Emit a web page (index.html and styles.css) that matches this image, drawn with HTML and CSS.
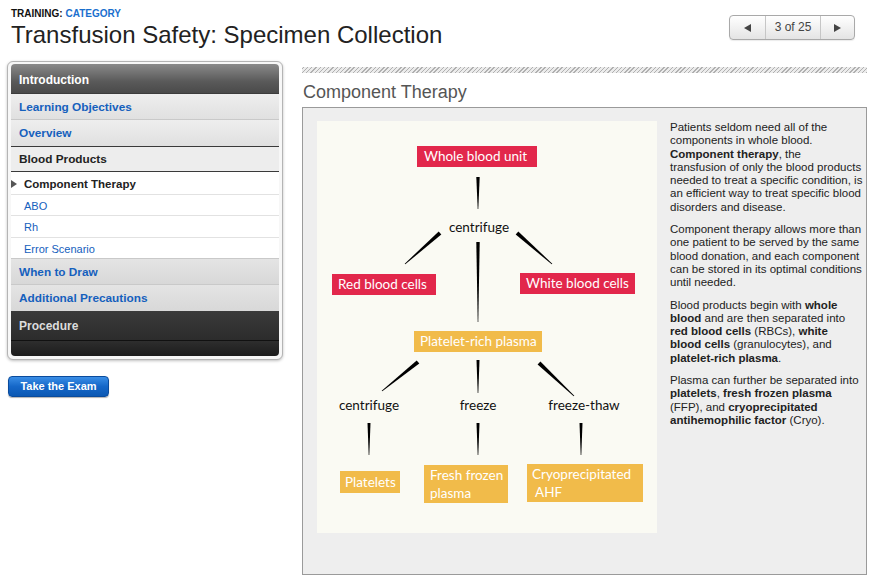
FILE: index.html
```html
<!DOCTYPE html>
<html>
<head>
<meta charset="utf-8">
<title>Transfusion Safety: Specimen Collection</title>
<link rel="stylesheet" href="styles.css">
</head>
<body>
<div class="header">
  <div class="titles">
    <div class="eyebrow">TRAINING: <span class="cat">CATEGORY</span></div>
    <h1 class="title">Transfusion Safety: Specimen Collection</h1>
  </div>
  <div class="pager">
    <span class="pg-btn pg-prev"><span class="tri-left"></span></span>
    <span class="pg-num">3 of 25</span>
    <span class="pg-btn pg-next"><span class="tri-right"></span></span>
  </div>
</div>
<div class="main">
  <div class="side">
    <div class="nav">
      <div class="nav-inner">
        <div class="nav-head">Introduction</div>
        <div class="nav-link">Learning Objectives</div>
        <div class="nav-link nav-link-end">Overview</div>
        <div class="nav-current">Blood Products</div>
        <div class="nav-sub nav-sub-active"><span class="marker"></span>Component Therapy</div>
        <div class="nav-sub">ABO</div>
        <div class="nav-sub nav-sub-rh">Rh</div>
        <div class="nav-sub nav-sub-last">Error Scenario</div>
        <div class="nav-link nav-link-b">When to Draw</div>
        <div class="nav-link nav-link-b nav-link-end">Additional Precautions</div>
        <div class="nav-dark">Procedure</div>
        <div class="nav-foot"></div>
      </div>
    </div>
    <button class="exam">Take the Exam</button>
  </div>
  <div class="content">
    <div class="stripe"></div>
    <h2 class="heading">Component Therapy</h2>
    <div class="panel">
      <div class="diagram">
        <svg class="lines" width="340" height="412" viewBox="0 0 340 412">
          <polygon points="159.3,56 162.7,56 161.3,88 160.7,88"/>
          <polygon points="121.7,110.5 124.3,113.5 88.3,143.3 87.7,142.7"/>
          <polygon points="201.3,110.5 198.7,113.5 234.7,143.3 235.3,142.7"/>
          <polygon points="159.3,121 162.7,121 161.3,201 160.7,201"/>
          <polygon points="99.7,239.4 102.3,242.6 65.3,270.3 64.7,269.7"/>
          <polygon points="159.5,239 162.5,239 161.3,272 160.7,272"/>
          <polygon points="223.4,240.5 220.6,243.5 256.7,275.3 257.3,274.7"/>
          <polygon points="50.5,302 53.5,302 52.3,334 51.7,334"/>
          <polygon points="159.5,302 162.5,302 161.3,334 160.7,334"/>
          <polygon points="262.5,302 265.5,302 264.3,334 263.7,334"/>
        </svg>
        <div class="node red n-whole">Whole blood unit</div>
        <div class="label l-cent1">centrifuge</div>
        <div class="node red n-rbc">Red blood cells</div>
        <div class="node red n-wbc">White blood cells</div>
        <div class="node gold n-prp">Platelet-rich plasma</div>
        <div class="label l-cent2">centrifuge</div>
        <div class="label l-freeze">freeze</div>
        <div class="label l-thaw">freeze-thaw</div>
        <div class="node gold n-plt">Platelets</div>
        <div class="node gold two n-ffp">Fresh frozen<br>plasma</div>
        <div class="node gold two n-cryo">Cryoprecipitated<br>&nbsp;AHF</div>
      </div>
      <div class="text">
        <p>Patients seldom need all of the<br>components in whole blood.<br><b>Component therapy</b>, the<br>transfusion of only the blood products<br>needed to treat a specific condition, is<br>an efficient way to treat specific blood<br>disorders and disease.</p>
        <p>Component therapy allows more than<br>one patient to be served by the same<br>blood donation, and each component<br>can be stored in its optimal conditions<br>until needed.</p>
        <p>Blood products begin with <b>whole<br>blood</b> and are then separated into<br><b>red blood cells</b> (RBCs), <b>white<br>blood cells</b> (granulocytes), and<br><b>platelet-rich plasma</b>.</p>
        <p>Plasma can further be separated into<br><b>platelets</b>, <b>fresh frozen plasma</b><br>(FFP), and <b>cryoprecipitated<br>antihemophilic factor</b> (Cryo).</p>
      </div>
    </div>
  </div>
</div>
</body>
</html>
```
FILE: styles.css
```css
* { box-sizing: border-box; }
html, body { margin: 0; padding: 0; background: #fff; }
body { font-family: "Liberation Sans", Arial, sans-serif; color: #222; width: 877px; height: 588px; overflow: hidden; }

.header { display: flex; justify-content: space-between; align-items: flex-start; height: 50px; padding: 0 22px 0 11px; }
.titles { padding-top: 8px; }
.eyebrow { font-size: 10px; line-height: 12px; font-weight: bold; color: #111; }
.eyebrow .cat { color: #1a6fce; }
.title { margin: 1px 0 0; font-size: 24px; line-height: 28px; font-weight: normal; color: #222; }

.pager { margin-top: 15px; display: flex; height: 25px; border: 1px solid #a9a9a9; border-radius: 4px; background: linear-gradient(#ffffff, #e4e4e4); box-shadow: 0 1px 1px rgba(0,0,0,0.08); }
.pg-btn { display: flex; align-items: center; justify-content: center; }
.pg-prev { width: 36px; border-right: 1px solid #c6c6c6; }
.pg-next { width: 34px; border-left: 1px solid #c6c6c6; }
.pg-num { width: 54px; text-align: center; font-size: 12px; line-height: 23px; color: #444; }
.tri-left { width: 0; height: 0; border-top: 4.5px solid transparent; border-bottom: 4.5px solid transparent; border-right: 7px solid #444; }
.tri-right { width: 0; height: 0; border-top: 4.5px solid transparent; border-bottom: 4.5px solid transparent; border-left: 7px solid #444; }

.main { display: flex; padding-left: 7px; gap: 19px; }
.side { width: 276px; margin-top: 11px; }
.nav { border: 1px solid #b4b4b4; border-radius: 6px; padding: 2px 3px 3px 3px; background: #f7f7f7; box-shadow: 0 1px 3px rgba(0,0,0,0.25); }
.nav-inner { border-radius: 4px; overflow: hidden; background: #fff; }
.nav-head { height: 30px; padding: 1px 0 0 8px; font-size: 12px; font-weight: bold; line-height: 30px; color: #fff; background: linear-gradient(#8a8a8a, #5a5a5a 60%, #4a4a4a); border-bottom: 1px solid #3c3c3c; }
.nav-link { height: 26px; padding: 1px 0 0 8px; font-size: 11.8px; font-weight: bold; line-height: 25px; color: #1560bd; background: linear-gradient(#eeeeee, #e0e0e0); border-bottom: 1px solid #c9c9c9; }
.nav-link-b { background: linear-gradient(#e4e4e4, #d8d8d8); }
.nav-current { height: 26px; padding: 1px 0 0 8px; font-size: 11.8px; font-weight: bold; line-height: 23px; color: #222; background: #ededed; border-top: 1px solid #3a3a3a; border-bottom: 1px solid #3a3a3a; }
.nav-sub { height: 21px; padding: 1px 0 0 13px; font-size: 11px; line-height: 20px; color: #1560bd; border-bottom: 1px solid #e2e2e2; background: #fff; }
.nav-sub-rh { height: 22px; line-height: 21px; }
.nav-sub-last { border-bottom: 1px solid #c9c9c9; }
.nav-sub-active { height: 23px; padding: 1px 0 0 0; line-height: 22px; display: flex; align-items: center; font-weight: bold; color: #222; font-size: 11.5px; }
.marker { width: 0; height: 0; border-top: 4px solid transparent; border-bottom: 4px solid transparent; border-left: 6px solid #555; margin-right: 7px; }
.nav-link-end { border-bottom: none; }
.nav-dark { height: 30px; padding: 1px 0 0 8px; font-size: 12px; font-weight: bold; line-height: 29px; color: #dcdcdc; background: linear-gradient(#3a3a3a, #2c2c2c); border-bottom: 1px solid #111; }
.nav-foot { height: 15px; background: linear-gradient(#2e2e2e, #1c1c1c); }

.exam { display: block; margin: 16px 0 0 1px; width: 101px; height: 21px; padding: 0; border: 1px solid #0a4b9c; border-radius: 4px; background: linear-gradient(#3a8ee6, #1567c8 50%, #0b58b3); color: #fff; font-family: "Liberation Sans", Arial, sans-serif; font-size: 11px; font-weight: bold; line-height: 19px; text-align: center; box-shadow: 0 1px 1px rgba(0,0,0,0.3); }

.content { width: 565px; }
.stripe { margin-top: 17px; height: 6px; background: repeating-linear-gradient(-45deg, #b0b0b0 0, #b0b0b0 1px, #ececec 1px, #ececec 3px); }
.heading { margin: 9px 0 5px 1px; height: 20px; font-size: 18px; line-height: 20px; font-weight: normal; color: #555; }
.panel { display: flex; align-items: flex-start; height: 468px; padding: 13px 2px 0 14px; border: 1px solid #9a9a9a; background: #eeeeee; gap: 13px; }

.diagram { position: relative; flex: none; width: 340px; height: 412px; background: #fafaf3; font-family: Lato, "Open Sans", sans-serif; }
.lines { position: absolute; left: 0; top: 0; fill: #000; }
.node { position: absolute; color: #fff; font-size: 13.5px; line-height: 21px; padding-left: 7px; white-space: nowrap; }
.red { background: #e2274b; }
.gold { background: #f1bb4a; }
.two { line-height: 18px; padding-top: 1px; }
.n-whole { left: 100px; top: 25px; width: 120px; height: 21px; }
.n-rbc { left: 15px; top: 153px; width: 104px; height: 21px; padding-left: 6px; }
.n-wbc { left: 203px; top: 152px; width: 115px; height: 21px; padding-left: 6px; }
.n-prp { left: 97px; top: 210px; width: 128px; height: 21px; padding-left: 6px; }
.n-plt { left: 23px; top: 350px; width: 60px; height: 22px; line-height: 22px; padding-left: 5px; }
.n-ffp { left: 107px; top: 344px; width: 84px; height: 38px; padding-left: 6px; }
.n-cryo { left: 210px; top: 343px; width: 116px; height: 38px; padding-left: 5px; }
.label { position: absolute; color: #111; font-size: 13.5px; line-height: 18px; white-space: nowrap; transform: translateX(-50%); }
.l-cent1 { left: 162px; top: 97px; }
.l-cent2 { left: 52px; top: 275px; }
.l-freeze { left: 161px; top: 275px; }
.l-thaw { left: 267px; top: 275px; }

.text { flex: 1; font-size: 11.5px; line-height: 13.3px; color: #222; white-space: nowrap; }
.text p { margin: 0 0 9px; }
.text b { font-weight: bold; }
```
